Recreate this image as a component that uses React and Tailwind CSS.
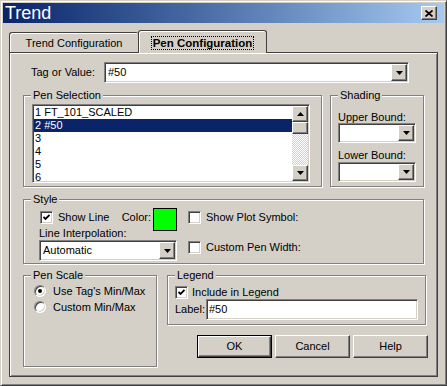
import React from 'react';

const FONT = "font-['Liberation_Sans',Arial,sans-serif]";
const sunken = "border border-t-[#808080] border-l-[#808080] border-r-white border-b-white shadow-[inset_1px_1px_0_#404040,inset_-1px_-1px_0_#d4d0c8]";
const raised = "border border-t-white border-l-white border-r-[#404040] border-b-[#404040] shadow-[inset_-1px_-1px_0_#808080] bg-[#d4d0c8]";

function ArrowDown() {
    return (
        <svg width="7" height="4" viewBox="0 0 7 4"><path d="M0 0h7L3.5 4z" fill="#000" /></svg>
    );
}

function ArrowUp() {
    return (
        <svg width="7" height="4" viewBox="0 0 7 4"><path d="M0 4h7L3.5 0z" fill="#000" /></svg>
    );
}

function Combo({ value, className }) {
    return (
        <div className={`${sunken} bg-white p-[1px] flex ${className}`}>
            <div className="flex-1 pl-[2px] leading-[17px] self-center">{value}</div>
            <div className={`${raised} w-[16px] h-full flex items-center justify-center shrink-0`}>
                <ArrowDown />
            </div>
        </div>
    );
}

function Checkbox({ checked }) {
    return (
        <div className={`${sunken} bg-white w-[13px] h-[13px] flex items-center justify-center shrink-0`}>
            {checked && (
                <svg width="7" height="7" viewBox="0 0 7 7">
                    <path d="M0.5 3l2 2 4-4" stroke="#000" strokeWidth="1.8" fill="none" />
                </svg>
            )}
        </div>
    );
}

function Radio({ checked }) {
    return (
        <div className="w-[12px] h-[12px] rounded-full border border-t-[#808080] border-l-[#808080] border-r-white border-b-white shadow-[inset_1px_1px_0_#404040,inset_-1px_-1px_0_#d4d0c8] bg-white flex items-center justify-center shrink-0">
            {checked && <div className="w-[4px] h-[4px] rounded-full bg-black" />}
        </div>
    );
}

function GroupBox({ label, className, children }) {
    return (
        <div className={`relative border border-[#808080] shadow-[inset_1px_1px_0_#fff,1px_1px_0_#fff] shrink-0 ${className}`}>
            <span className="absolute left-[7px] top-[-7px] px-[2px] leading-[13px] bg-[#d4d0c8]">{label}</span>
            {children}
        </div>
    );
}

function Button({ label, isDefault }) {
    if (isDefault) {
        return (
            <div className="w-[75px] h-[23px] border border-black">
                <div className={`${raised} w-full h-full flex items-center justify-center`}>{label}</div>
            </div>
        );
    }
    return <div className={`${raised} w-[75px] h-[23px] flex items-center justify-center`}>{label}</div>;
}

export default function App() {
    const pens = ['FT_101_SCALED', '#50', '', '', '', ''];

    return (
        <div className={`${FONT} text-[11px] text-black w-[447px] h-[386px] bg-[#d4d0c8] border border-t-[#d4d0c8] border-l-[#d4d0c8] border-r-[#404040] border-b-[#404040] shadow-[inset_1px_1px_0_#fff,inset_-1px_-1px_0_#808080] p-[2px] flex flex-col overflow-hidden`}>
            {/* Title bar */}
            <div className="h-[20px] shrink-0 flex items-center justify-between bg-linear-to-r from-[#0a246a] to-[#a6caf0]">
                <span className="pl-[2px] text-[18px] leading-[18px] text-white">Trend</span>
                <div className={`${raised} w-[16px] h-[14px] mr-[7px] flex items-center justify-center`}>
                    <svg width="8" height="7" viewBox="0 0 8 7">
                        <path d="M0.5 0.5l7 6M7.5 0.5l-7 6" stroke="#000" strokeWidth="1.7" />
                    </svg>
                </div>
            </div>

            <div className="pl-[6px] pt-[7px]">
                {/* Tabs */}
                <div className="flex items-end h-[22px]">
                    <div className="w-[129px] h-[20px] border-t border-l border-[#404040] rounded-tl-[3px] rounded-tr-[2px] shadow-[inset_1px_1px_0_#fff] flex items-center justify-center pt-[1px]">
                        Trend Configuration
                    </div>
                    <div className="relative top-[1px] z-10 w-[129px] h-[23px] border-t border-l border-r border-[#404040] rounded-t-[3px] shadow-[inset_1px_1px_0_#fff] bg-[#d4d0c8] flex items-center justify-center pt-[1px]">
                        <span className="border border-dotted border-black px-[1px] font-bold text-[11.5px] leading-[12px]">Pen Configuration</span>
                    </div>
                </div>

                {/* Panel */}
                <div className="w-[429px] h-[325px] border border-[#404040] shadow-[inset_1px_1px_0_#fff,inset_-1px_-1px_0_#808080] pl-[13px] pr-[13px] pt-[9px] flex flex-col">
                    <div className="flex items-center h-[21px] pl-[8px]">
                        <span className="w-[73px] shrink-0">Tag or Value:</span>
                        <Combo value="#50" className="w-[305px] h-[21px]" />
                    </div>

                    <div className="flex gap-[8px] mt-[12px]">
                        <GroupBox label="Pen Selection" className="w-[299px] h-[92px] pt-[8px] pl-[8px]">
                            <div className={`${sunken} bg-white p-[1px] w-[278px] h-[79px] flex`}>
                                <div className="flex-1 overflow-hidden">
                                    {pens.map((p, i) => (
                                        <div
                                            key={i}
                                            className={`h-[13px] leading-[13px] pl-[1px] whitespace-pre ${i === 1 ? 'bg-[#0a246a] text-white' : ''}`}
                                        >
                                            {p ? `${i + 1} ${p}` : `${i + 1}`}
                                        </div>
                                    ))}
                                </div>
                                <div className="w-[16px] flex flex-col shrink-0">
                                    <div className={`${raised} h-[16px] flex items-center justify-center shrink-0`}><ArrowUp /></div>
                                    <div className={`${raised} h-[12px] shrink-0`} />
                                    <div className="flex-1 bg-[repeating-conic-gradient(#d4d0c8_0_25%,#ffffff_0_50%)] bg-[length:2px_2px]" />
                                    <div className={`${raised} h-[16px] flex items-center justify-center shrink-0`}><ArrowDown /></div>
                                </div>
                            </div>
                        </GroupBox>

                        <GroupBox label="Shading" className="w-[94px] h-[92px] pt-[15px] pl-[7px]">
                            <div className="leading-[13px]">Upper Bound:</div>
                            <Combo value="" className="w-[78px] h-[20px] -mt-[1px]" />
                            <div className="leading-[13px] mt-[6px]">Lower Bound:</div>
                            <Combo value="" className="w-[78px] h-[20px]" />
                        </GroupBox>
                    </div>

                    <GroupBox label="Style" className="w-full h-[65px] mt-[12px] flex">
                        <div className="ml-[15px] w-[138px] pt-[8px] shrink-0">
                            <div className="flex items-start h-[23px]">
                                <div className="mt-[3px] ml-[1px]"><Checkbox checked /></div>
                                <span className="ml-[5px] mt-[3px] leading-[13px]">Show Line</span>
                                <span className="ml-auto mt-[3px] leading-[13px]">Color:</span>
                                <div className="ml-[2px] w-[24px] h-[23px] bg-[#00ff00] border border-black" />
                            </div>
                            <div className="-mt-[4px] leading-[13px]">Line Interpolation:</div>
                            <Combo value="Automatic" className="w-[138px] h-[21px]" />
                        </div>
                        <div className="ml-[11px] pt-[11px]">
                            <div className="flex items-center h-[13px]">
                                <Checkbox />
                                <span className="ml-[5px]">Show Plot Symbol:</span>
                            </div>
                            <div className="flex items-center h-[13px] mt-[17px]">
                                <Checkbox />
                                <span className="ml-[5px]">Custom Pen Width:</span>
                            </div>
                        </div>
                    </GroupBox>

                    <div className="flex mt-[11px]">
                        <GroupBox label="Pen Scale" className="w-[134px] h-[92px] pt-[9px] pl-[10px]">
                            <div className="flex items-center h-[12px]">
                                <Radio checked />
                                <span className="ml-[7px]">Use Tag's Min/Max</span>
                            </div>
                            <div className="flex items-center h-[12px] mt-[4px]">
                                <Radio />
                                <span className="ml-[7px]">Custom Min/Max</span>
                            </div>
                        </GroupBox>

                        <div className="ml-[10px] w-[261px] shrink-0">
                            <GroupBox label="Legend" className="w-[259px] h-[50px] pt-[10px] pl-[7px]">
                                <div className="flex items-center h-[13px]">
                                    <Checkbox checked />
                                    <span className="ml-[4px]">Include in Legend</span>
                                </div>
                                <div className="flex items-center h-[21px]">
                                    <span className="w-[31px] shrink-0">Label:</span>
                                    <div className={`${sunken} bg-white w-[212px] h-[21px] pl-[2px] flex items-center`}>#50</div>
                                </div>
                            </GroupBox>
                            <div className="flex justify-end gap-[3px] mt-[10px]">
                                <Button label="OK" isDefault />
                                <Button label="Cancel" />
                                <Button label="Help" />
                            </div>
                        </div>
                    </div>
                </div>
            </div>
        </div>
    );
}
